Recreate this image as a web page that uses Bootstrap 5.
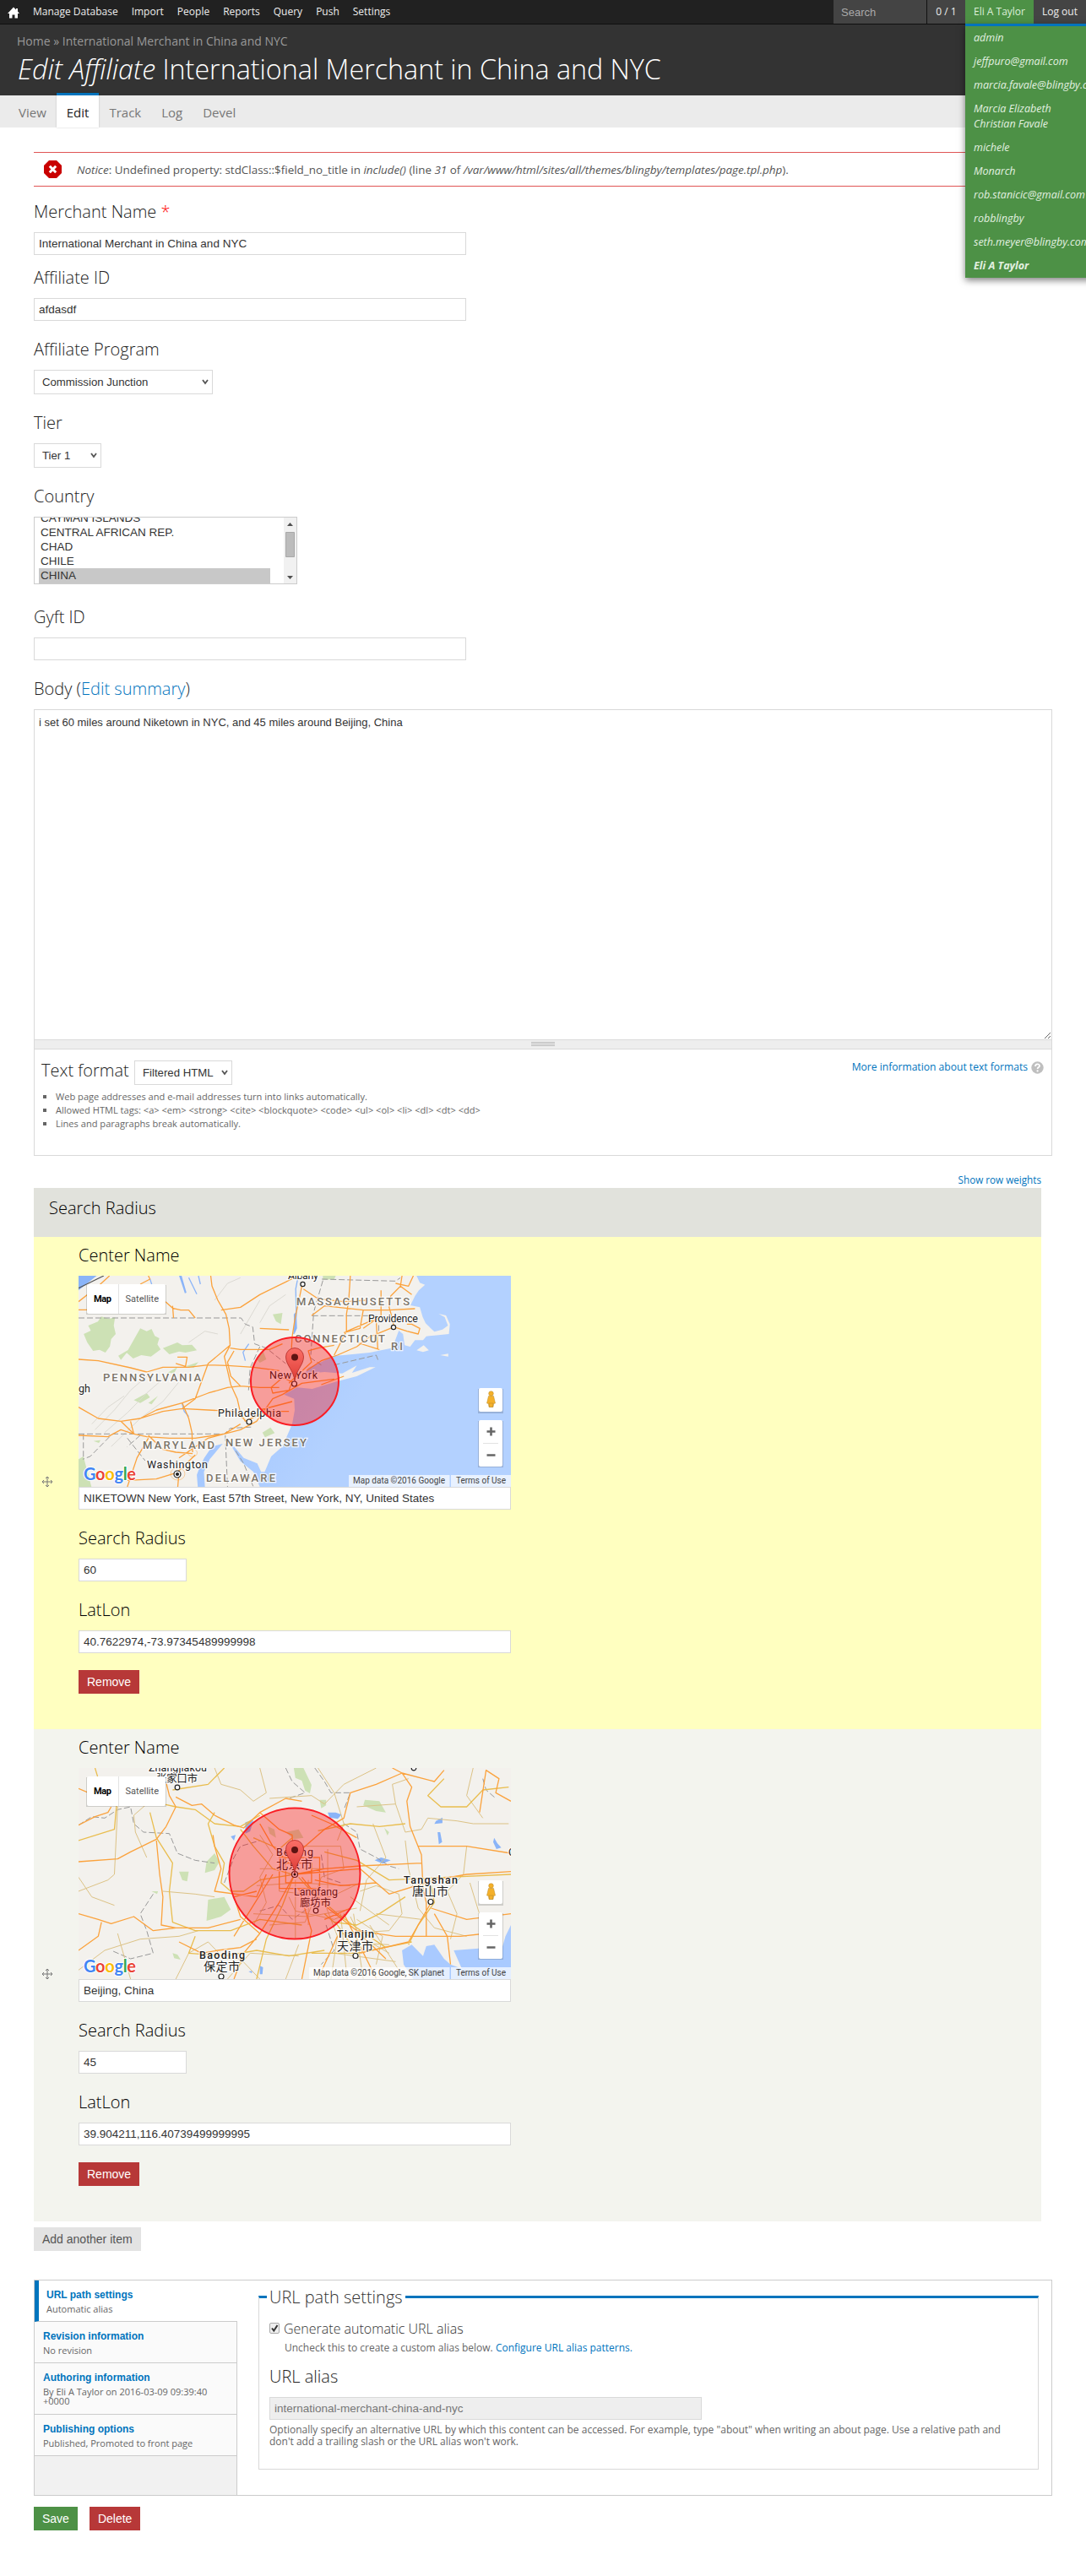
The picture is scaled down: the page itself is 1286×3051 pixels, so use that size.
<!DOCTYPE html>
<html lang="en">
<head>
<meta charset="utf-8">
<title>Edit Affiliate International Merchant in China and NYC</title>
<link rel="stylesheet" href="https://cdn.jsdelivr.net/npm/bootstrap@5.3.0/dist/css/bootstrap.min.css">
<style>
body{font-family:"Open Sans",sans-serif;font-size:13px;line-height:18px;color:#333;background:#fff;min-height:3051px;overflow-x:hidden}
a{color:#0074bd;text-decoration:none}
.topbar{height:29px;background:#212121;border-bottom:1px solid #0f0f0f;font-size:12px;color:#eee;line-height:28px}
.topbar a{color:#eee;padding:0 8px;display:block}
.cell-gray{background:#444;height:28px}
.search-cell{width:111px;border-right:1px solid #111;padding-left:9px;font:13px/30px "Liberation Sans",sans-serif;color:#aaa}
.user-cell{background:#4d9146;width:81px;height:28px;position:relative}
.user-cell>a{padding:0 10px;color:#dcefd9}
.user-menu{position:absolute;top:28px;left:0;width:160px;height:301px;background:#4d9146;border-top:3px solid #0074bd;box-shadow:0 3px 8px rgba(0,0,0,.5);z-index:5;font-style:italic;font-size:12.5px;line-height:18px}
.user-menu a{padding:5px 10px;color:#e2f0e0}
.out-cell{width:62px}
.masthead{height:84px;background:#333;padding:9px 20px 0}
.crumbs{font-size:14px;line-height:22px;color:#999}
.page-title{font-size:32.25px;font-weight:300;line-height:44px;color:#fff;margin:0 0 0 1px;white-space:nowrap}
.tabstrip{height:38px;background:#ebebeb;font-size:15px;line-height:40px;padding-left:10px}
.tabstrip a{color:#777;padding:0 12px;height:38px}
.tabstrip a.on{background:#fff;color:#222;border-top:3px solid #0074bd;margin-top:-3px;height:41px;box-shadow:0 0 2px rgba(0,0,0,.2)}
.page-body{padding:29px 40px 0}
.notice-box{border-top:1px solid #e05555;border-bottom:1px solid #e05555;height:41px;padding-left:12px;color:#555}
.notice-text{font-size:13.45px;margin-left:18px;white-space:nowrap}
.lbl{font-size:20px;font-weight:300;line-height:28px;padding-top:1px;margin-bottom:10px;display:block;color:#222}
.req{color:#f00}
.inp,.sel{border:1px solid #d9d9d9;border-radius:0;background-color:#fff;font:13.5px/17px "Liberation Sans",sans-serif;color:#333;display:block;box-shadow:none;outline:0}
.inp{width:512px;height:27px;min-height:0;padding:4px 5px}
.inp-s{width:128px}
.sel{font-size:13.2px;height:29px;padding:5px 9px;appearance:none;background:#fff url("data:image/svg+xml,%3Csvg xmlns='http://www.w3.org/2000/svg' width='8' height='7'%3E%3Cpath d='M1 1l3 4 3-4' fill='none' stroke='%23555' stroke-width='1.8'/%3E%3C/svg%3E") no-repeat right 4.5px top 10px}
.mb19{margin-bottom:19px}
.listbox{width:312px;height:80px;border:1px solid #ccc;overflow:hidden;font:13.5px/17px "Liberation Sans",sans-serif;color:#333}
.listbox .opts{width:295px;padding-left:5px;margin-top:-8px}
.listbox .opts div{width:274px;padding-left:2px;height:17px}
.listbox .opts .picked{background:#c8c8c8;height:19px}
.ta{width:100%;height:391px;border:1px solid #d9d9d9;border-bottom:0;border-radius:0;font:13px/17px "Liberation Sans",sans-serif;color:#333;padding:6px 5px;resize:both;display:block}
.grip{height:12px;background:#eee;border:1px solid #d9d9d9}
.fmt{height:126px;border:1px solid #d9d9d9;border-top:0;padding:13px 9px 0 8px}
.tips{font-size:11.08px;line-height:16px;color:#666;list-style:square;padding-left:17px;margin:6px 0 0}
.radtable{width:1193px}
.rad-head{height:58px;background:#e1e2dc;padding:9px 18px 0}
.rad-head .lbl,.rad-row .lbl{color:#000}
.rad-row{height:583px;padding:7px 0 0 9px}
.rad-a{background:#ffffc0}.rad-b{background:#f3f4ee}
.rad-side{width:44px;padding-top:272px}
.btnx{border:0;border-radius:0;font:14px/18px "Liberation Sans",sans-serif;padding:5px 10px;height:28px;color:#fff}
.bred,.bred:hover{background:#b73838;color:#fff}.bgreen{background:#4d9146}.bgray{background:#e3e3e3;color:#555}
.vtabs{height:256px;border:1px solid #ccc;margin-top:34px}
.vmenu{width:240px;background:#f1f1f1;border-right:1px solid #ccc}
.vmenu a{display:block;background:#fafafa;border-bottom:1px solid #ccc;padding:9px 10px;font:bold 12px/17px "Liberation Sans",sans-serif;height:49px}
.vmenu a span{display:block;font:11px/11px "Open Sans",sans-serif;color:#666;margin-top:2px}
.vmenu a.on{background:#fff;border-left:5px solid #0074bd;width:240px;padding-left:9px}
.vmenu a.tall{height:61px}
.vpane{border:1px solid #d9d9d9;border-top:3px solid #0074bd;margin:18px 15px 0 25px;height:206px;padding-left:12px;width:924px;min-width:0}
.vpane .leg{font-size:20px;font-weight:300;line-height:28px;background:#fff;width:164px;margin:-15px 0 0 -3px;padding-left:3px;color:#333;white-space:nowrap}
.desc{font-size:12px;line-height:14px;color:#666}
.mapbox{display:block;width:512px;height:250px;font-family:Roboto,"Noto Sans CJK SC",sans-serif}
.mapbox path{vector-effect:non-scaling-stroke}
.rd{fill:none;stroke:#fba23c;stroke-width:1.3;stroke-linejoin:round}
.rd2{fill:none;stroke:#e9bd4e;stroke-width:1.3;stroke-linejoin:round}
.rd3{fill:none;stroke:#dcc285;stroke-width:1;stroke-linejoin:round}
.bd{fill:none;stroke:#999;stroke-width:1;stroke-dasharray:7 3}
.wat{fill:#8ab4f8;stroke:none}.riv{fill:none;stroke:#8ab4f8;stroke-width:1.3}
.gr{fill:#cde1b5}
.cty{font-size:12.5px;fill:#222;stroke:#fff;stroke-width:2.5px;paint-order:stroke;stroke-opacity:.75}
.stt{font-size:13px;font-weight:500;fill:#7b7468;stroke:#fff;stroke-width:2.5px;paint-order:stroke;stroke-opacity:.8}
</style>
</head>
<body>
<nav class="topbar d-flex">
  <a href="#" style="padding:0 8px 0 9px"><svg width="14" height="14" viewBox="0 0 14 14"><path fill="#fff" d="M7 .5 10 3.5V2h2v3.5L14 8h-2v5.5H8.500V9.500h-3v4H2V8H0z"/></svg></a>
  <a href="#">Manage Database</a><a href="#">Import</a><a href="#">People</a><a href="#">Reports</a><a href="#">Query</a><a href="#">Push</a><a href="#">Settings</a>
  <div class="ms-auto d-flex">
    <div class="cell-gray search-cell">Search</div>
    <div class="cell-gray text-center" style="width:45px">0 / 1</div>
    <div class="user-cell"><a href="#" class="text-nowrap">Eli A Taylor</a>
      <div class="user-menu"><a href="#">admin</a><a href="#">jeffpuro@gmail.com</a><a href="#">marcia.favale@blingby.com</a><a href="#">Marcia Elizabeth<br>Christian Favale</a><a href="#">michele</a><a href="#">Monarch</a><a href="#">rob.stanicic@gmail.com</a><a href="#">robblingby</a><a href="#">seth.meyer@blingby.com</a><a href="#" class="fw-bold">Eli A Taylor</a></div>
    </div>
    <div class="cell-gray out-cell"><a href="#" class="text-nowrap px-0 text-center">Log out</a></div>
  </div>
</nav>
<header class="masthead">
  <div class="crumbs">Home » International Merchant in China and NYC</div>
  <h1 class="page-title"><em>Edit Affiliate</em> International Merchant in China and NYC</h1>
</header>
<div class="tabstrip d-flex"><a href="#">View</a><a href="#" class="on">Edit</a><a href="#">Track</a><a href="#">Log</a><a href="#">Devel</a></div>

<main class="page-body">
  <div class="notice-box d-flex align-items-center mb-3"><svg width="21" height="21" viewBox="0 0 21 21"><path fill="#c90000" d="M6 0h9l6 6v9l-6 6H6l-6-6V6z"/><path d="m6.800 6.800 7.400 7.400m0-7.400-7.400 7.400" stroke="#fff" stroke-width="3"/></svg>
    <div class="notice-text"><em>Notice</em>: Undefined property: stdClass::$field_no_title in <em>include()</em> (line <em>31</em> of <em>/var/www/html/sites/all/themes/blingby/templates/page.tpl.php</em>).</div></div>
  <form>
  <div style="margin:-1px 0 12px"><label class="lbl">Merchant Name <span class="req">*</span></label><input class="inp" value="International Merchant in China and NYC"></div>
  <div class="mb19"><label class="lbl">Affiliate ID</label><input class="inp" value="afdasdf"></div>
  <div class="mb19"><label class="lbl">Affiliate Program</label><select class="sel" style="width:212px"><option>Commission Junction</option></select></div>
  <div class="mb19"><label class="lbl">Tier</label><select class="sel" style="width:80px"><option>Tier 1</option></select></div>
  <div class="mb-4"><label class="lbl">Country</label>
    <div class="listbox d-flex"><div class="opts"><div>CAYMAN ISLANDS</div><div>CENTRAL AFRICAN REP.</div><div>CHAD</div><div>CHILE</div><div class="picked">CHINA</div></div>
      <svg width="15" height="78"><path fill="#f1f1f1" d="M0 0h15v78H0z"/><path fill="#505050" d="M4 10h7L7.500 6zM4 69h7l-3.500 4z"/><path fill="#bcbcbc" stroke="#a8a8a8" d="M2.500 17.500h10v29h-10z"/></svg></div></div>
  <div class="mb19"><label class="lbl">Gyft ID</label><input class="inp" value=""></div>
  <div><label class="lbl">Body (<a href="#">Edit summary</a>)</label>
    <textarea class="ta">i set 60 miles around Niketown in NYC, and 45 miles around Beijing, China</textarea>
    <div class="grip d-flex justify-content-center align-items-center"><svg width="28" height="6"><path stroke="#bbb" d="M0 .5h28M0 2.500h28M0 4.500h28"/></svg></div>
    <div class="fmt"><div class="d-flex"><label class="lbl mb-0 text-nowrap" style="width:110px;margin-top:-3px">Text format</label><select class="sel" style="width:116px"><option>Filtered HTML</option></select>
      <a href="#" class="ms-auto" style="font-size:12.1px;line-height:16px">More information about text formats</a><svg width="15" height="15" viewBox="0 0 15 15" style="margin:1px 0 0 4px"><circle cx="7.500" cy="7.500" r="7.200" fill="#bfbfbf"/><path d="M5 6c0-3.500 5-3.300 5-.6C10 7.200 7.600 7 7.600 9" fill="none" stroke="#fff" stroke-width="1.800"/><circle cx="7.600" cy="11.400" r="1.100" fill="#fff"/></svg></div>
      <ul class="tips"><li>Web page addresses and e-mail addresses turn into links automatically.</li><li>Allowed HTML tags: &lt;a&gt; &lt;em&gt; &lt;strong&gt; &lt;cite&gt; &lt;blockquote&gt; &lt;code&gt; &lt;ul&gt; &lt;ol&gt; &lt;li&gt; &lt;dl&gt; &lt;dt&gt; &lt;dd&gt;</li><li>Lines and paragraphs break automatically.</li></ul></div></div>

  <div class="radtable">
    <div class="text-end" style="padding-top:19px;height:38px"><a href="#" style="font-size:11.7px">Show row weights</a></div>
    <div class="rad-head"><span class="lbl">Search Radius</span></div>
    <div class="rad-row rad-a d-flex"><div class="rad-side"><svg width="14" height="14" viewBox="0 0 14 14"><path d="M7 1v12M1 7h12M5 3l2-2 2 2M5 11l2 2 2-2M3 5 1 7l2 2M11 5l2 2-2 2" fill="none" stroke="#777"/></svg></div>
      <div><label class="lbl">Center Name</label>
<svg class="mapbox" viewBox="0 0 512 250">
<defs><linearGradient id="pin" x2="0" y2="1"><stop offset="0" stop-color="#fb6f67"/><stop offset="1" stop-color="#dd3b35"/></linearGradient>
<clipPath id="cap"><path d="M0 0h512v250H0z"/></clipPath>
<linearGradient id="sea" x2="1" y2=".3"><stop offset=".45" stop-color="#a2c6ff"/><stop offset=".75" stop-color="#b3d1ff"/></linearGradient></defs>
<path fill="url(#sea)" d="M0 0h512v250H0z"/>
<g clip-path="url(#cap)"><g transform="scale(.3827 .33333) translate(-139 -93)">
<path fill="#f3f1ed" d="M139 93H1185L1195 118 1211 125 1192 145 1180 165 1166 198 1195 205 1204 240 1213 262 1240 292 1265 284 1282 270 1272 240 1253 228 1276 234 1288 265 1285 300 1240 305 1215 308 1205 322 1180 322 1165 345 1148 340 1143 300 1130 288 1118 325 1107 350 1040 366 960 375 930 377 890 400 850 420 838 442 900 435 955 440 1000 412 985 438 1040 418 1058 418 1000 450 940 468 862 495 815 490 775 515 806 530 808 570 800 620 785 660 770 700 735 735 715 790 704 790 692 760 650 740 620 700 608 690 640 752 680 790 700 843H530L527 790 545 745 585 690 552 700 528 740 515 770 505 800 508 843H139zM1185 358l22-18 16 18-18 6zM1258 375l25-5v10z"/>
<path class="gr" d="M155 300l22-12-8-18 30-14 10-18 25 8 18-6-4 30 6 30-14 18-4 26-14 22-18-10-20 4-18-30zM310 320l20-40 20 10 15-8 10 25 14 8-6 22 10 18-30 25-30-5-25 12-20-20-18 25-8-15 30-20zM400 350l45-20 15 10 30-2 15 20-35 8-20-4-30 10zM740 230l30-5-5 40-15-10zM895 93h40l-5 12-35 2zM708 650l25-18 13 20-30 15zM690 390l20-30 10 30-20 12zM139 745l15-10 25 108h-40zM310 535l40-25 10 15-30 20zM355 545l30-25-20 30zM410 440l35-22-10 20zM185 680l22-3-5 10zM470 415l40-15-15 20z"/>
<path fill="none" stroke="#dcdad3" d="M190 640 250 570 300 500 360 440M220 650 290 580 350 510 400 460M180 620 230 560 280 520M240 700 330 600 400 540 450 470M560 180 600 120 640 100M480 330 530 290 570 300M700 260 730 200 780 160M640 300 670 240 700 180"/>
<path class="wat" d="M139 145 195 93h-56zM450 93l8 0 15 60-5 2zM805 230l8-10 2 60-8 20z"/>
<path class="riv" d="M805 300l8-70-2-90 8-47M360 104l7 25M480 100l25 58M459 545l7 30 14 18M510 93l6 30M655 395l-7-30 18-30"/>
<path class="bd" d="M139 243H642L655 265 678 275 684 335 720 350 780 405M139 655H590L608 635 680 630M593 660 600 843M862 235H1068V310M895 110 876 185 864 233M892 105 1120 112 1135 100M866 233 857 385 890 410M930 410 1060 375 1068 400M625 715 650 760 680 843M154 655V745M290 670 345 750M330 660 290 700M700 345 670 420 665 500M235 665 175 735 152 745"/>
<path fill="none" stroke="#555" stroke-width="1.200" d="M139 137 217 93"/>
<path class="rd" d="M139 185 200 130 235 93M139 214H165M430 200 433 243M355 93 360 105 330 123M408 185 430 208 455 215 480 215 500 243M548 93 552 130 570 180 595 230 605 280 608 340 590 380 600 430 610 480 630 530 640 580 655 610M580 215 640 205 700 160 780 115 800 103M800 103 803 93M830 130 808 250 800 310 798 350M835 140 880 175 960 185 1030 180M980 93 975 180 968 230 968 290 930 375M860 235 900 200 1020 215 1100 215 1180 210M1140 93 1135 130 1105 165 1100 205 1110 245 1115 275 1155 290 1190 300 1195 280 1170 265 1155 265M1175 93 1160 130 1120 120M1135 130 1170 160M1115 275 1040 310 1000 345 940 375 890 395 845 430M1020 215 1010 280 960 295M970 290 1050 250M139 390 200 395 300 420 350 435 400 418 480 418 540 410 600 412 680 418 760 430M139 560 200 600 270 610 330 600 400 575 460 565 540 570 620 575 655 605M270 610 310 655 350 665 420 670 500 670 590 655 640 620M330 600 380 570 460 545 540 510 600 490 640 485 700 490 760 490M608 340 540 405 500 530 460 565M608 350 640 355 730 355 770 335M460 545 480 600 490 650 492 720M300 610 310 655 270 640 230 665 139 660M355 670 320 740 290 843M355 660 400 710 440 720 492 725M450 740 540 670 640 640 690 610 740 530 770 515 830 475 930 460M446 790 500 730M446 843 450 790 380 815 290 820M640 485 610 450 600 400 620 360M1000 330 1070 355M1020 280 1075 235 1075 145M700 280 790 285M445 382 475 382 470 415 440 405M735 490 770 455 800 470 790 500 740 510zM790 475 860 400 850 360 880 350 930 340M1060 250 1065 355M890 480 960 450M800 540 700 570M655 610 720 575 790 575"/>
<circle cx="492" cy="722" r="14" class="rd"/><circle cx="446" cy="797" r="22" class="rd"/>
</g></g>
<g class="stt"><text x="258" y="35" textLength="134">MASSACHUSETTS</text><text x="256" y="79" textLength="107">CONNECTICUT</text><text x="370" y="88" textLength="14">RI</text><text x="29" y="125" textLength="116">PENNSYLVANIA</text><text x="76" y="205" textLength="85">MARYLAND</text><text x="174" y="202" textLength="96">NEW JERSEY</text><text x="151" y="244" textLength="82">DELAWARE</text></g>
<g class="cty"><text x="248" y="4" textLength="36">Albany</text><text x="343" y="55" textLength="59">Providence</text><text x="0" y="138">gh</text><text x="165" y="167" textLength="75">Philadelphia</text><text x="81" y="228" textLength="72">Washington</text><text x="226" y="122" textLength="57">New York</text></g>
<g fill="#fff" stroke="#222" stroke-width="1.200"><circle cx="265.500" cy="10" r="2.600"/><circle cx="373" cy="61" r="2.600"/><circle cx="202" cy="173" r="3"/><circle cx="117" cy="235" r="4"/><circle cx="117" cy="235" r="1.500" fill="#222"/><circle cx="255.500" cy="128" r="3"/></g>
<circle cx="256" cy="125" r="52" fill="#f00" fill-opacity=".35" stroke="#fa1d24" stroke-width="2"/>
<path d="M256 125c-1-13-10.500-19-10.500-29a10.500 10.500 0 0 1 21 0c0 10-9.500 16-10.500 29z" fill="url(#pin)" stroke="#b32a26" stroke-width=".8"/><circle cx="256" cy="96.500" r="4" fill="#5d1412"/>
<g fill="#fff"><path fill="#000" fill-opacity=".15" d="M9 11h95v35H9zM473 134h30v29h-30zM473 172h30v55h-30z"/><rect x="10" y="10" width="93" height="35" rx="2"/><rect x="474" y="133" width="28" height="28" rx="2"/><rect x="474" y="171" width="28" height="55" rx="2"/></g>
<path stroke="#e2e2e2" d="M47.500 10v35M479 198.500h18"/><path stroke="#666" stroke-width="2.600" d="M483.500 184.500h10M488.500 179.500v10M483.500 212.500h10"/>
<g fill="#f4b02a" stroke="#b98a2a" stroke-width=".5"><path d="M485.500 142.500h6l2 8.500-2 .5-.5 4h-5l-.5-4-2-.5zM486 151h5l-.6 4.500h-3.800z"/><circle cx="488.500" cy="139.500" r="2.800"/></g>
<path fill="#fff" fill-opacity=".7" d="M320 236h119.500v14H320zM441 236h71v14h-71z"/>
<g font-size="11"><text x="18" y="31" font-weight="bold" textLength="21">Map</text><text x="55.500" y="31" fill="#555" textLength="39.500">Satellite</text></g>
<g font-size="10" fill="#444"><text x="325" y="246" textLength="109">Map data ©2016 Google</text><text x="447" y="246" textLength="59">Terms of Use</text></g>
<text x="6" y="242" font-family="Lato" font-weight="bold" font-size="20" textLength="62" stroke="#fff" stroke-width="2" paint-order="stroke"><tspan fill="#4285f4">G</tspan><tspan fill="#ea4335">o</tspan><tspan fill="#fbbc05">o</tspan><tspan fill="#4285f4">g</tspan><tspan fill="#34a853">l</tspan><tspan fill="#ea4335">e</tspan></text>
</svg>
        <input class="inp mb19" value="NIKETOWN New York, East 57th Street, New York, NY, United States">
        <label class="lbl">Search Radius</label><input class="inp inp-s mb19" value="60">
        <label class="lbl">LatLon</label><input class="inp" value="40.7622974,-73.97345489999998" style="margin-bottom:20px">
        <button type="button" class="btnx bred d-block">Remove</button></div></div>
    <div class="rad-row rad-b d-flex"><div class="rad-side"><svg width="14" height="14" viewBox="0 0 14 14"><path d="M7 1v12M1 7h12M5 3l2-2 2 2M5 11l2 2 2-2M3 5 1 7l2 2M11 5l2 2-2 2" fill="none" stroke="#777"/></svg></div>
      <div><label class="lbl">Center Name</label>
<svg class="mapbox" viewBox="0 0 512 250">
<path fill="#f3f1ed" d="M0 0h512v250H0z"/>
<g clip-path="url(#cap)"><g transform="scale(.3827 .33333) translate(-139 -42)">
<path fill="#a9caff" d="M1477 600 1460 640 1445 700 1410 680 1360 685 1300 690 1325 755 1290 740 1270 720 1240 670 1215 675 1205 710 1170 670 1140 690 1145 740 1175 792H1477z"/>
<path class="wat" d="M1055 370l20-10 30 10-25 12zM1245 230l20-12v20l-25 3zM1250 270l8 0 6 35-10 8zM1425 290l10 20 12 15-15 5-10-25zM655 235l25-8-10 40-15 8zM910 200l25 0 18 8-12 15-25-5zM700 745l10 5-2 25-8 0zM665 765l12-2-2 8zM610 285l15-5-5 20z"/>
<path class="gr" d="M805 42h30l25 60-5 30-15-10-10-35-20-10zM535 375l25-30 15 30-15 30-30 10zM540 510l50-10 20 45-30 25-45 15zM1025 155l45 5 20 40-30-5-40-20zM450 410l30 0-5 35-15-5zM725 250l20 10 5 30-20-15zM780 270l40-10 15 30-30 5zM885 155l20 0 0 20-15 10zM430 700l15 5 10 18-20-5zM1085 255l15 15-5 12zM365 480l20 0-3 10z"/>
<path class="bd" d="M139 245 180 215 220 220 260 190 300 180 310 240 340 270 420 275 445 345 500 370 560 380M370 490 330 560 350 620 370 700 300 720 240 690M780 42 800 90 840 130 790 150M870 42 900 90 920 130 980 130 960 190M1390 80 1400 120 1430 150M960 240 1000 270 1010 330 1060 360 1100 390 1130 400M890 350 900 430 950 450M590 450 620 360 640 320 700 300M700 550 760 530 800 580 850 540M905 600 930 690 890 740"/>
<path class="rd3" d="M139 480 230 440 250 420 260 180M139 430 180 500 250 530M300 93 350 170 310 210 315 270 350 360M560 42 580 100 640 120 680 160 720 130 700 42M730 150 860 140 900 170 960 100 1060 42M880 42 930 130 960 240 940 300M1000 180 1120 170 1110 100 1160 80M1120 170 1150 270 1200 260 1220 220 1310 230 1360 240 1470 240M1360 42 1340 140 1390 220M1340 320 1330 420 1280 480 1310 560 1290 650M1150 300 1160 400 1190 540 1240 610 1340 640M1050 240 1090 360 1030 440 1010 550M139 760 220 690 330 650 450 640 510 620M440 792 480 700 540 660 590 720 640 720 700 792M820 670 780 792M260 630 300 792M1010 480 1060 460 1130 490 1140 560 1100 620 960 630M700 280 740 350 700 430 720 520 680 600M830 320 950 320 960 400 890 430 870 500 840 590 730 600M760 340V480M810 440V650M850 440V600M910 330V520M700 400H900M690 460 820 450 980 460M760 480 920 500 1010 450M790 500 810 550 930 580 970 560M900 520 940 640 920 792M1000 580 1080 640 1060 740M980 570 1010 640 1100 700M680 560 850 570 1000 540M600 792 670 700 820 710M400 480 500 490 560 500M1350 450 1390 600M950 560 970 792M990 560 1020 792M940 660 1100 670M930 700 1120 730M1040 600 1130 760M980 500 1100 600M1060 560 1200 580"/>
<path class="rd2" d="M190 42 200 80 260 130 250 260 139 300M400 170 440 180 500 190 560 240 640 250 700 210M360 200 380 290 430 380 420 480 430 590 500 620 610 620 700 580 830 600M430 120 540 100 590 42M560 200 540 240 560 320 590 380 580 450 610 480M640 260 680 320 740 400 800 420M800 290 760 330 680 290M880 265 980 240 1070 250 1150 240M900 340 1000 370 1100 440 1280 430 1477 420M820 430 860 480 940 560 1000 610 1090 680M807 420 770 530 720 650 690 792M900 560 940 600 1000 700M610 480 650 480 700 440 807 420M860 700 1000 700 1170 660M1230 460 1240 520 1190 600 1160 670M1270 80 1220 140 1260 180 1340 180 1390 120 1470 110M500 640 480 700 590 710 690 690 790 710 900 690M930 590 1000 600 1070 560 1150 500"/>
<path class="rd" d="M139 375 260 365 300 340 380 295 410 250 440 180 420 140 410 93M440 145 490 175 520 170 560 210 620 245 650 255 700 200 760 260 800 280 807 420 760 520 700 630 650 700 620 792M139 245 190 215 230 200 240 180M380 300 390 420 400 500 395 600 440 610M139 560 200 580 240 595 310 570 370 620 440 610 540 610 640 580M139 690 200 640 210 590M450 660 520 700 570 690 640 680 690 650M830 330 900 260 960 220 980 130 1060 100 1140 60M700 200 780 150 830 160M860 210 920 240 1000 290M1110 42 1140 60 1240 90 1270 50M1140 60 1170 110 1155 160 1165 250 1200 350 1205 470 1215 520 1215 640M1477 410 1340 420 1240 440 1100 490 1010 400 807 420M1230 540 1340 580 1477 560M1190 320 1340 320 1477 345M807 420 900 400 1010 390 1200 380M830 430 900 530 1000 620 1090 720M720 420 690 500 560 480 580 400 560 320 555 280M690 480 620 500 640 570 700 630M820 470 860 620 830 792M940 640 880 792M1000 620 1120 640 1320 640 1400 630M1010 700 1160 660 1230 520M1477 160 1430 130 1440 80 1400 50 1380 200M139 115 190 140M780 380H860V450H780zM760 360H885V470H760zM740 420 620 640M960 560 1060 790M900 580 980 540M700 240 740 320 807 400M1240 560 1280 640 1290 740M870 440 950 460 1060 450"/>
</g></g>
<g class="cty"><text x="83" y="4" textLength="69">Zhangjiakou</text><text x="92" y="17" textLength="49">张家口市</text><text x="234" y="104" textLength="44">Beijing</text><text x="234" y="119" font-size="14" textLength="43">北京市</text><text x="255" y="151" textLength="52">Langfang</text><text x="262" y="164" textLength="37">廊坊市</text><text x="385" y="137" font-weight="500" textLength="64">Tangshan</text><text x="395" y="151" font-size="14" textLength="43">唐山市</text><text x="306" y="201" font-weight="500" textLength="44">Tianjin</text><text x="306" y="216" font-size="14" textLength="43">天津市</text><text x="143" y="226" font-weight="500" textLength="54">Baoding</text><text x="148" y="240" font-size="14" textLength="43">保定市</text></g>
<g fill="#fff" stroke="#222" stroke-width="1.200"><circle cx="117" cy="23" r="2.800"/><circle cx="397" cy="0" r="2.800"/><circle cx="281" cy="169" r="2.800"/><circle cx="417" cy="158.500" r="3"/><circle cx="328" cy="222.500" r="3"/><circle cx="169" cy="247" r="3"/><circle cx="256" cy="126" r="3.500"/></g>
<circle cx="256" cy="125" r="77.500" fill="#f00" fill-opacity=".35" stroke="#fa1d24" stroke-width="2"/>
<circle cx="256" cy="126" r="1.500" fill="#300"/>
<path d="M256 125c-1-13-10.500-19-10.500-29a10.500 10.500 0 0 1 21 0c0 10-9.500 16-10.500 29z" fill="url(#pin)" stroke="#b32a26" stroke-width=".8"/><circle cx="256" cy="97" r="4" fill="#5d1412"/>
<text class="cty" x="509" y="104">C</text>
<g fill="#fff"><path fill="#000" fill-opacity=".15" d="M9 11h95v35H9zM473 134h30v29h-30zM473 172h30v55h-30z"/><rect x="10" y="10" width="93" height="35" rx="2"/><rect x="474" y="133" width="28" height="28" rx="2"/><rect x="474" y="171" width="28" height="55" rx="2"/></g>
<path stroke="#e2e2e2" d="M47.500 10v35M479 198.500h18"/><path stroke="#666" stroke-width="2.600" d="M483.500 184.500h10M488.500 179.500v10M483.500 212.500h10"/>
<g fill="#f4b02a" stroke="#b98a2a" stroke-width=".5"><path d="M485.500 142.500h6l2 8.500-2 .5-.5 4h-5l-.5-4-2-.5zM486 151h5l-.6 4.500h-3.800z"/><circle cx="488.500" cy="139.500" r="2.800"/></g>
<path fill="#fff" fill-opacity=".7" d="M273 236h166.500v14H273zM441 236h71v14h-71z"/>
<g font-size="11"><text x="18" y="31" font-weight="bold" textLength="21">Map</text><text x="55.500" y="31" fill="#555" textLength="39.500">Satellite</text></g>
<g font-size="10" fill="#444"><text x="278" y="246" textLength="155">Map data ©2016 Google, SK planet</text><text x="447" y="246" textLength="59">Terms of Use</text></g>
<text x="6" y="242" font-family="Lato" font-weight="bold" font-size="20" textLength="62" stroke="#fff" stroke-width="2" paint-order="stroke"><tspan fill="#4285f4">G</tspan><tspan fill="#ea4335">o</tspan><tspan fill="#fbbc05">o</tspan><tspan fill="#4285f4">g</tspan><tspan fill="#34a853">l</tspan><tspan fill="#ea4335">e</tspan></text>
</svg>
        <input class="inp mb19" value="Beijing, China">
        <label class="lbl">Search Radius</label><input class="inp inp-s mb19" value="45">
        <label class="lbl">LatLon</label><input class="inp" value="39.904211,116.40739499999995" style="margin-bottom:20px">
        <button type="button" class="btnx bred d-block">Remove</button></div></div>
  </div>
  <button type="button" class="btnx bgray d-block" style="margin-top:7px">Add another item</button>

  <div class="vtabs d-flex">
    <div class="vmenu flex-shrink-0"><a href="#" class="on">URL path settings<span>Automatic alias</span></a><a href="#">Revision information<span>No revision</span></a><a href="#" class="tall">Authoring information<span>By Eli A Taylor on 2016-03-09 09:39:40 +0000</span></a><a href="#">Publishing options<span>Published, Promoted to front page</span></a></div>
    <div class="vpane">
      <div class="leg">URL path settings</div>
      <div class="d-flex" style="margin-top:11px"><svg width="12" height="13" style="margin:5px 5px 0 0"><rect x=".5" y=".5" width="11" height="12" rx="1.500" fill="#eee" stroke="#aaa"/><path d="m3 6.500 2.300 3L9.500 3" fill="none" stroke="#333" stroke-width="2"/></svg><label class="fw-light text-nowrap" style="font-size:16px;line-height:24px;color:#333">Generate automatic URL alias</label></div>
      <div class="desc" style="margin:3px 0 0 18px;line-height:16px">Uncheck this to create a custom alias below. <a href="#">Configure URL alias patterns.</a></div>
      <label class="lbl" style="margin-top:11px">URL alias</label>
      <input class="inp" style="background:#eee;color:#777" value="international-merchant-china-and-nyc">
      <div class="desc" style="margin-top:5px;width:880px">Optionally specify an alternative URL by which this content can be accessed. For example, type "about" when writing an about page. Use a relative path and don't add a trailing slash or the URL alias won't work.</div>
    </div>
  </div>
  <div class="d-flex" style="gap:14px;margin-top:13px"><button type="button" class="btnx bgreen">Save</button><button type="button" class="btnx bred">Delete</button></div>
  </form>
</main>
<script src="https://cdn.jsdelivr.net/npm/bootstrap@5.3.0/dist/js/bootstrap.bundle.min.js"></script>
</body>
</html>
